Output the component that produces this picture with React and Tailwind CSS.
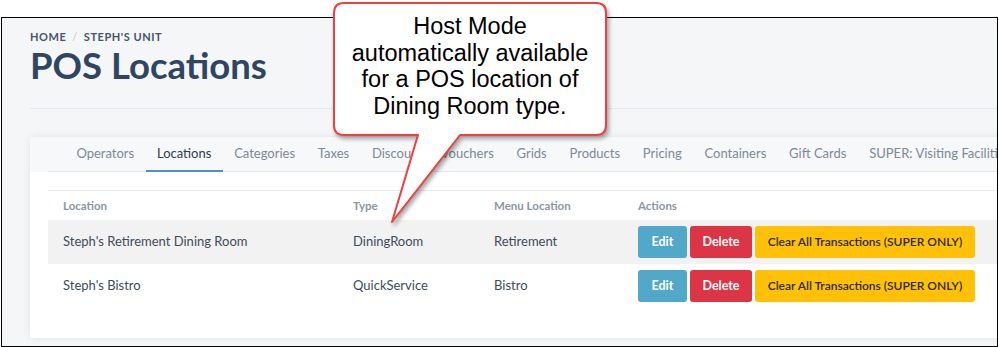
import React from "react";

const tabs = [
  "Operators",
  "Locations",
  "Categories",
  "Taxes",
  "Discounts / Vouchers",
  "Grids",
  "Products",
  "Pricing",
  "Containers",
  "Gift Cards",
  "SUPER: Visiting Facilities",
];

const rows = [
  { name: "Steph's Retirement Dining Room", type: "DiningRoom", menu: "Retirement", shaded: true },
  { name: "Steph's Bistro", type: "QuickService", menu: "Bistro", shaded: false },
];

const Callout = () => (
  <div className="absolute left-[330px] top-0 w-[290px] h-[230px]">
    <svg width="290" height="230" className="absolute inset-0 drop-shadow-[2px_3px_2px_rgba(0,0,0,0.35)]">
      <path
        d="M14,3 H266 Q276,3 276,13 V125 Q276,135 266,135 H130 L62,222 L88,135 H14 Q4,135 4,125 V13 Q4,3 14,3 Z"
        fill="#ffffff"
        stroke="#ee4040"
        strokeWidth="2"
        strokeLinejoin="round"
      />
    </svg>
    <div className="absolute left-[4px] top-[13px] w-[272px] text-center text-black text-[23.5px] leading-[26.7px] font-['Liberation_Sans',Arial,sans-serif]">
      <div>Host Mode</div>
      <div>automatically available</div>
      <div>for a POS location of</div>
      <div>Dining Room type.</div>
    </div>
  </div>
);

const App = () => {
  return (
    <div className="relative w-[999px] h-[347px] bg-white overflow-hidden font-['Lato','Noto_Sans',sans-serif]">
      <div className="mt-[17px] ml-px w-[997px] h-[330px] border border-black bg-[#f5f6f8] overflow-hidden">
        <div className="pl-[28px]">
          <div className="pt-[13px] flex items-center gap-[6px] text-[11px] leading-[12px] font-bold tracking-[0.05em] text-[#44546a]">
            <span>HOME</span>
            <span className="text-[#c3c8cf] font-normal">/</span>
            <span>STEPH'S UNIT</span>
          </div>
          <h1 className="text-[36.5px] leading-[44px] font-bold text-[#2f4562]">POS Locations</h1>
          <div className="mt-[21px] border-t border-[#e4e7eb]"></div>

          <div className="mt-[28px] w-[1000px] h-[201px] bg-white rounded-[3px] shadow-[0_0_8px_rgba(0,0,0,0.08)]">
            <div className="bg-[#f7f8fa] pl-[18px] rounded-t-[3px]">
              <div className="flex pl-[17px] h-[35px] border-b border-[#e6e8ec] whitespace-nowrap">
                {tabs.map((t) => (
                  <div
                    key={t}
                    className={
                      t === "Locations"
                        ? "px-[11.4px] flex items-center text-[13px] text-[#2f3d4f] border-b-2 border-[#4a90d9] -mb-px"
                        : "px-[11.4px] flex items-center text-[13px] text-[#7d8898]"
                    }
                  >
                    {t}
                  </div>
                ))}
              </div>
            </div>

            <div className="pl-[18px] pt-[18px]">
              <div className="border-t border-[#e8eaed]">
                <div className="flex h-[29px] items-center text-[11.5px] font-bold text-[#8c96a4]">
                  <div className="w-[290px] pl-[15px]">Location</div>
                  <div className="w-[141px] pl-[15px]">Type</div>
                  <div className="w-[144px] pl-[15px]">Menu Location</div>
                  <div className="pl-[15px]">Actions</div>
                </div>
                {rows.map((r) => (
                  <div
                    key={r.name}
                    className={
                      r.shaded
                        ? "flex h-[44px] items-center text-[13px] text-[#3e4b5b] bg-[#f2f2f2]"
                        : "flex h-[44px] items-center text-[13px] text-[#3e4b5b] bg-white"
                    }
                  >
                    <div className="w-[290px] pl-[15px]">{r.name}</div>
                    <div className="w-[141px] pl-[15px]">{r.type}</div>
                    <div className="w-[144px] pl-[15px]">{r.menu}</div>
                    <div className="pl-[15px] flex gap-[3px] text-[12.5px]">
                      <button className="w-[49px] h-[32px] rounded-[3px] bg-[#52a8c9] text-white font-bold">Edit</button>
                      <button className="w-[62px] h-[32px] rounded-[3px] bg-[#dc3545] text-white font-bold">Delete</button>
                      <button className="w-[220px] h-[32px] rounded-[3px] bg-[#ffc107] text-[#2a2a2a] text-[12px] font-semibold">
                        Clear All Transactions (SUPER ONLY)
                      </button>
                    </div>
                  </div>
                ))}
              </div>
            </div>
          </div>
        </div>
      </div>
      <Callout />
    </div>
  );
};

export default App;
